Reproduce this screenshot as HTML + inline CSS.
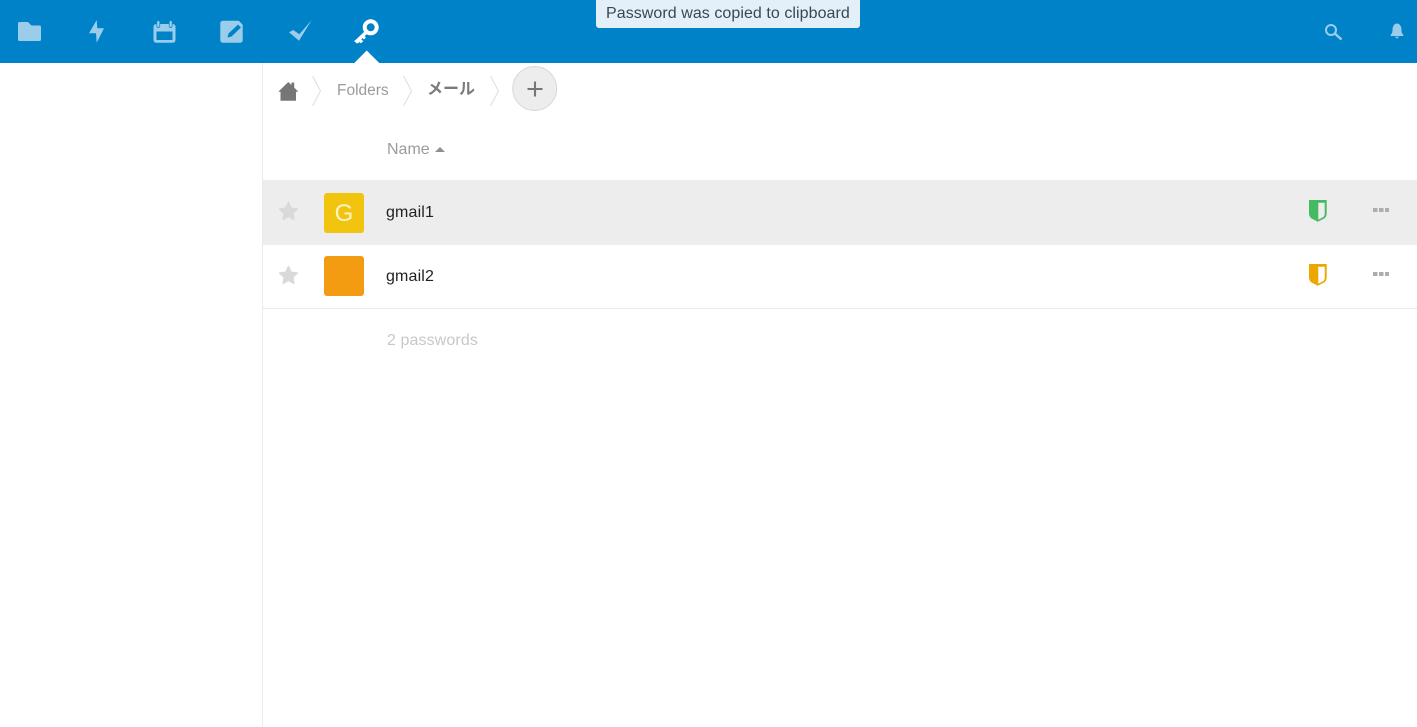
<!DOCTYPE html>
<html lang="en">
<head>
<meta charset="utf-8">
<title>Passwords</title>
<style>
html,body{margin:0;padding:0;width:1417px;height:727px;overflow:hidden;background:#fff;font-family:"Liberation Sans","Noto Sans CJK JP",sans-serif}
.a{position:absolute;white-space:nowrap}
svg{position:absolute;overflow:visible}
</style>
</head>
<body>
<div class="a" style="left:0;top:0;width:1417px;height:63px;background:#0082c9"></div>

<svg style="left:0;top:0" width="1417" height="63" viewBox="0 0 1417 63">
  <!-- folder -->
  <path d="M18 23.500q0-1.500 1.500-1.500h8.500l3.500 3.500h8q1.500 0 1.500 1.500v12.500q0 1.500-1.500 1.500h-20q-1.500 0-1.500-1.500z" fill="#99cde9"/>
  <!-- lightning -->
  <path d="M96.700 20l-7.700 13.300h7l.7 9.400 7.300-14.400h-6.700l-.6-8.300z" fill="#99cde9"/>
  <!-- calendar -->
  <path fill-rule="evenodd" d="M156.500 24h16q3 0 3 3v12.700q0 3-3 3h-16q-3 0-3-3v-12.700q0-3 3-3zM156.500 31.500v8.500h16v-8.500z" fill="#99cde9"/>
  <rect x="156.800" y="20.500" width="3" height="7" rx="1.500" fill="#99cde9" stroke="#0082c9" stroke-width="0.700"/>
  <rect x="169.200" y="20.500" width="3" height="7" rx="1.500" fill="#99cde9" stroke="#0082c9" stroke-width="0.700"/>
  <!-- notes -->
  <rect x="220.300" y="20.700" width="22.400" height="22" rx="2.500" fill="#99cde9"/>
  <path d="M238.500 20.500l4.500 4.500v-4.500z" fill="#0082c9"/>
  <path d="M238 24.500l3 3-9.500 9-4 1 1-4z" fill="#0082c9"/>
  <!-- check -->
  <path d="M289 32.300l4.300-2.300 6 4.300 12.400-14.300-12.700 20.700z" fill="#99cde9"/>
  <!-- key -->
  <circle cx="370.700" cy="27.300" r="6" fill="none" stroke="#fff" stroke-width="4"/>
  <path d="M366.500 32l-10 9.500" stroke="#fff" stroke-width="3.600" fill="none"/>
  <path d="M354 41l2.500-1.500 3 3-2.500 1zM358 40.500l2.500-2 2.800 2.800-2.500 2zM361.500 37l2-2 2.500 2.500-2 2z" fill="#fff"/>
  <!-- active triangle -->
  <path d="M354.300 63l12.400-12.500 12.600 12.500z" fill="#fff"/>
  <!-- search -->
  <circle cx="1331" cy="30" r="5" fill="none" stroke="#99cde9" stroke-width="2"/>
  <path d="M1335 33.700l6.500 5.800" stroke="#99cde9" stroke-width="2.400" fill="none"/>
  <!-- bell -->
  <path d="M1390.700 34.500c1.700-1 1.800-3 1.800-5 0-3.200 2-6 4.500-6s4.500 2.800 4.500 6c0 2 .1 4 1.800 5v1.500h-12.600z" fill="#99cde9"/>
  <path d="M1394.800 36.800h4.400l-2.200 1.800z" fill="#99cde9"/>
</svg>

<!-- toast -->
<div class="a" style="left:596px;top:0;width:264px;height:28px;background:#e3f0f9;border-radius:0 0 3px 3px"></div>
<div class="a" style="left:606px;top:5px;font-size:16px;line-height:18px;color:#3e4650;letter-spacing:.06px">Password was copied to clipboard</div>

<!-- sidebar border -->
<div class="a" style="left:262px;top:63px;width:1px;height:664px;background:#ebebeb"></div>

<!-- breadcrumb -->
<svg style="left:0;top:0" width="600" height="160" viewBox="0 0 600 160">
  <path d="M278.300 91.700l10-9.700 3.200 3v-2.500h2.700v5l4.100 4.200h-2.300v9h-15.500v-9z" fill="#767676"/>
  <path d="M312.500 76l8 15-8 15M403.500 76l8 15-8 15M490.500 76l8 15-8 15" fill="none" stroke="#dedede" stroke-width="1"/>
  <circle cx="534.700" cy="88.500" r="22" fill="#ededed" stroke="#d9d9d9" stroke-width="1"/>
  <path d="M535 81.500v15M527.500 89h15" stroke="#767676" stroke-width="2.100" fill="none"/>
  <path d="M435 152l5-5 5 5z" fill="#8f8f8f"/>
</svg>
<div class="a" style="left:337px;top:82px;font-size:15.500px;line-height:18px;color:#9b9b9b">Folders</div>
<div class="a" style="left:427px;top:80px;font-size:16px;line-height:20px;font-weight:bold;color:#7b7b7b">メール</div>
<div class="a" style="left:387px;top:141px;font-size:16px;line-height:18px;color:#9b9b9b">Name</div>

<!-- rows -->
<div class="a" style="left:263px;top:180px;width:1154px;height:65px;background:#ededed"></div>
<div class="a" style="left:263px;top:308px;width:1154px;height:1px;background:#e9e9e9"></div>

<div class="a" style="left:324px;top:193px;width:40px;height:40px;border-radius:3px;background:#f1c40f"></div>
<div class="a" style="left:324px;top:194px;width:40px;height:40px;color:#fdf3c4;font-size:24px;line-height:40px;text-align:center">G</div>
<div class="a" style="left:324px;top:256px;width:40px;height:40px;border-radius:3px;background:#f39c12"></div>

<div class="a" style="left:386px;top:204px;font-size:16px;line-height:18px;color:#222;letter-spacing:.15px">gmail1</div>
<div class="a" style="left:386px;top:268px;font-size:16px;line-height:18px;color:#222;letter-spacing:.15px">gmail2</div>

<div class="a" style="left:387px;top:332px;font-size:16px;line-height:18px;color:#c8c8c8;letter-spacing:.1px">2 passwords</div>

<svg style="left:0;top:0" width="1417" height="320" viewBox="0 0 1417 320">
  <!-- stars -->
  <path d="M288.500 202.500l2.600 5.800 6.200.7-4.600 4.300 1.200 6.100-5.400-3-5.400 3 1.200-6.100-4.600-4.300 6.200-.7z" fill="#d9d9d9" stroke="#d9d9d9" stroke-width="1.500" stroke-linejoin="round"/>
  <path d="M288.500 266.500l2.600 5.800 6.200.7-4.600 4.300 1.200 6.100-5.400-3-5.400 3 1.200-6.100-4.600-4.300 6.200-.7z" fill="#d9d9d9" stroke="#d9d9d9" stroke-width="1.500" stroke-linejoin="round"/>
  <!-- shields -->
  <path d="M1309 200h17.700v13.500q0 3.500-3 5.300l-5.900 3-5.800-3q-3-1.800-3-5.300z" fill="#46ba61"/>
  <path d="M1318.300 202.700h6.400v11q0 2.300-2 3.700l-4.400 2.400z" fill="#ededed"/>
  <path d="M1309 264h17.700v13.500q0 3.500-3 5.300l-5.900 3-5.800-3q-3-1.800-3-5.300z" fill="#eca700"/>
  <path d="M1318.300 266.700h6.400v11q0 2.300-2 3.700l-4.400 2.400z" fill="#fff"/>
  <!-- more dots -->
  <g fill="#adadad">
    <rect x="1373" y="208" width="4.500" height="4"/><rect x="1379" y="208" width="4.500" height="4"/><rect x="1385" y="208" width="4" height="4"/>
    <rect x="1373" y="272" width="4.500" height="4"/><rect x="1379" y="272" width="4.500" height="4"/><rect x="1385" y="272" width="4" height="4"/>
  </g>
</svg>
</body>
</html>
